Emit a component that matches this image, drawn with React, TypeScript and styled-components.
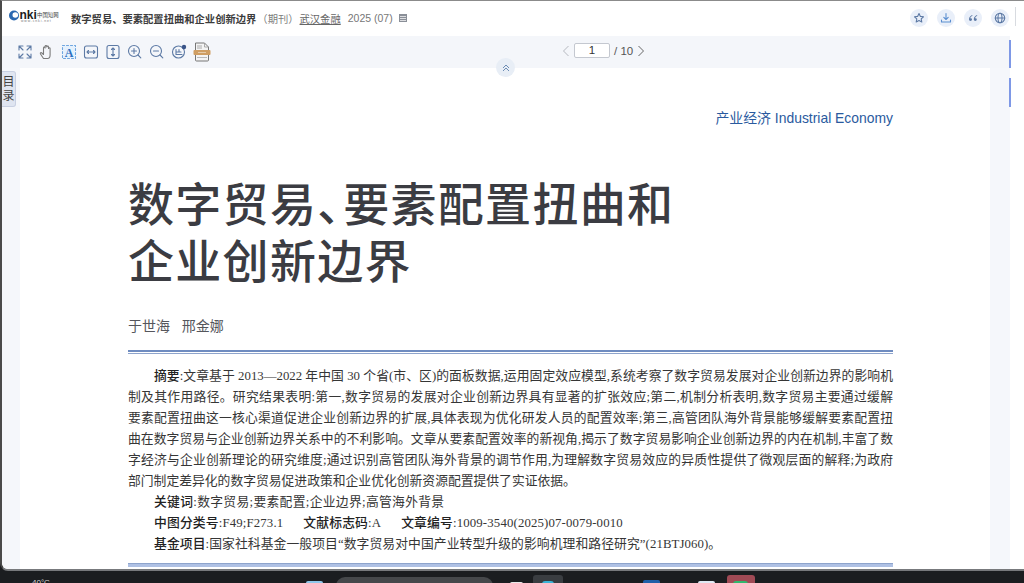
import React from 'react';
import styled, { createGlobalStyle } from 'styled-components';

const GlobalStyle = createGlobalStyle`
  html, body {
    margin: 0;
    padding: 0;
    background: #1b1d20;
  }
  * {
    box-sizing: border-box;
  }
`;

const CJK = `"Liberation Sans", "Noto Sans CJK SC", sans-serif`;
const CJK_SERIF = `"Liberation Serif", "Noto Sans CJK SC", serif`;

const Screen = styled.div`
  width: 1024px;
  height: 583px;
  display: flex;
  flex-direction: column;
  overflow: hidden;
  background: #1b1d20;
`;

const Viewer = styled.div`
  position: relative;
  height: 571px;
  flex: none;
  display: flex;
  flex-direction: column;
  background: #fff;
  border-top: 1px solid #8b8b8b;
  border-left: 2px solid #4a4a4a;
  border-bottom: 2px solid #77797c;
  border-bottom-left-radius: 8px;
  overflow: hidden;
`;

const Header = styled.header`
  height: 35px;
  flex: none;
  display: flex;
  align-items: center;
  padding: 0 15px 1px 7px;
  background: #fff;
  font-family: ${CJK};
`;

const LogoBox = styled.div`
  width: 52px;
  height: 16px;
  flex: none;
  align-self: flex-start;
  margin: 9px 10px 0 0;
`;

const Title = styled.span`
  font-size: 10.3px;
  font-weight: 700;
  color: #3c3c3c;
  white-space: nowrap;
`;

const Kind = styled.span`
  font-size: 10.3px;
  color: #7d7d7d;
  margin-left: 1px;
  margin-right: 1px;
  white-space: nowrap;
`;

const Journal = styled.span`
  font-size: 10.3px;
  color: #666;
  text-decoration: underline;
  white-space: nowrap;
`;

const Issue = styled.span`
  font-size: 10.5px;
  color: #777;
  margin-left: 7px;
  white-space: nowrap;
`;

const IssueIcon = styled.svg`
  width: 10px;
  height: 10px;
  margin-left: 5px;
  flex: none;
`;

const HeaderActions = styled.div`
  margin-left: auto;
  display: flex;
  gap: 9px;
`;

const RoundAction = styled.div`
  width: 18px;
  height: 18px;
  border-radius: 50%;
  background: #e9eff9;
  display: flex;
  align-items: center;
  justify-content: center;
`;

const HeaderDivider = styled.div`
  position: absolute;
  left: 1013px;
  top: 6px;
  width: 1px;
  height: 19px;
  background: #d8dbe0;
`;

const Toolbar = styled.div`
  height: 32px;
  flex: none;
  display: flex;
  align-items: center;
  position: relative;
  background: #f4f6fa;
  padding-left: 15px;
  margin-right: 14px;
`;

const Tools = styled.div`
  display: flex;
  align-items: center;
  gap: 6px;
`;

const Pager = styled.div`
  position: absolute;
  left: 560px;
  top: 7px;
  display: flex;
  align-items: center;
  gap: 4px;
  font-family: "Liberation Sans", sans-serif;
  font-size: 11.5px;
  color: #555;
`;

const PageInput = styled.div`
  width: 36px;
  height: 15px;
  background: #fff;
  border: 1px solid #c4c8d0;
  border-radius: 2px;
  text-align: center;
  line-height: 13px;
  color: #333;
`;

const CollapseButton = styled.div`
  position: absolute;
  left: 494px;
  top: 57px;
  width: 19px;
  height: 19px;
  border-radius: 50%;
  background: #e8eef6;
  display: flex;
  align-items: center;
  justify-content: center;
  z-index: 2;
`;

const Workspace = styled.div`
  flex: 1;
  display: flex;
  min-height: 0;
`;

const SideGutter = styled.div<{ $width: number }>`
  width: ${({ $width }) => $width}px;
  flex: none;
  background: #f5f7fb;
`;

const RightRail = styled.div`
  width: 14px;
  flex: none;
  background: #fff;
`;

const OutlineTab = styled.div`
  position: absolute;
  left: 0;
  top: 70px;
  width: 14px;
  height: 36px;
  background: #dfe5f1;
  border: 1px solid #c8d0e2;
  border-left: none;
  border-radius: 0 3px 3px 0;
  font-family: ${CJK};
  font-size: 12px;
  line-height: 14px;
  color: #444;
  text-align: center;
  padding-top: 3px;
`;

const Stripe = styled.div<{ $top: number; $height: number }>`
  position: absolute;
  right: 13px;
  top: ${({ $top }) => $top}px;
  width: 2px;
  height: ${({ $height }) => $height}px;
  background: #7e98e6;
`;

const Paper = styled.main`
  flex: 1;
  background: #fff;
  padding: 41px 98px 0 108px;
  overflow: hidden;
`;

const Column = styled.div`
  width: 765px;
  display: flex;
  flex-direction: column;
`;

const Section = styled.div`
  align-self: flex-end;
  font-family: ${CJK};
  font-size: 13.9px;
  line-height: 18px;
  color: #2a5a9e;
  white-space: nowrap;
`;

const PaperTitle = styled.h1`
  margin: 50px 0 0;
  font-family: ${CJK};
  font-size: 46px;
  font-weight: 500;
  line-height: 57px;
  letter-spacing: 1.3px;
  color: #3b3c42;
  white-space: nowrap;
`;

const NarrowMark = styled.span`
  letter-spacing: -20px;
`;

const Authors = styled.div`
  margin-top: 26px;
  font-family: ${CJK};
  font-size: 14px;
  line-height: 18px;
  color: #55565c;
  white-space: pre;
`;

const DoubleRule = styled.div`
  height: 4px;
  margin-top: 15px;
  border-top: 2px solid #6f8cc0;
  border-bottom: 1px solid #8ea4cc;
`;

const ClosingRule = styled.div`
  height: 4px;
  margin-top: 8px;
  background: #afc1e4;
  border-top: 1px solid #8ea4cc;
`;

const AbstractBlock = styled.div`
  margin-top: 12px;
  display: flex;
  flex-direction: column;
`;

const Line = styled.div<{ $indent?: boolean; $last?: boolean; $track?: number }>`
  height: 21px;
  font-family: ${CJK_SERIF};
  font-size: 12.8px;
  line-height: 21px;
  color: #363636;
  letter-spacing: ${({ $track }) => $track ?? 0}px;
  padding-left: ${({ $indent }) => ($indent ? 26 : 0)}px;
  text-align: justify;
  text-align-last: ${({ $last }) => ($last ? 'left' : 'justify')};
`;

const Strong = styled.span`
  font-weight: 500;
  color: #222;
`;

const FieldGap = styled.span`
  display: inline-block;
  width: 20px;
`;

const Taskbar = styled.footer`
  flex: 1;
  display: flex;
  align-items: flex-start;
  padding-left: 32px;
  overflow: hidden;
  background: #1b1d20;
`;

const Weather = styled.span`
  margin-top: 7px;
  font-family: "Liberation Sans", sans-serif;
  font-size: 8px;
  line-height: 10px;
  color: #d8d8d8;
`;

const TaskIcon = styled.div<{ $width: number; $before: number; $top: number; $color: string }>`
  width: ${({ $width }) => $width}px;
  height: 12px;
  flex: none;
  margin-left: ${({ $before }) => $before}px;
  margin-top: ${({ $top }) => $top}px;
  background: ${({ $color }) => $color};
  border-radius: 2px 2px 0 0;
`;

const SearchPill = styled.div`
  width: 157px;
  height: 16px;
  flex: none;
  margin: 6px 0 0 13px;
  background: #46484b;
  border-radius: 9px 9px 0 0;
`;

const Tile = styled.div<{ $width: number; $before: number; $color: string }>`
  width: ${({ $width }) => $width}px;
  height: 14px;
  flex: none;
  margin: 4px 0 0 ${({ $before }) => $before}px;
  padding-top: 6px;
  display: flex;
  justify-content: center;
  background: ${({ $color }) => $color};
  border-radius: 3px 3px 0 0;
`;

const TileGlyph = styled.div<{ $width: number; $color: string }>`
  width: ${({ $width }) => $width}px;
  height: 8px;
  background: ${({ $color }) => $color};
  border-radius: 3px 3px 0 0;
`;

const icon = { fill: 'none', stroke: '#5d7aa5', strokeWidth: 1.1, strokeLinecap: 'round', strokeLinejoin: 'round' } as const;

const Logo = () => (
  <svg viewBox="0 0 52 16" width="52" height="16">
    <circle cx="5" cy="5.5" r="5" fill="#2a68b0" />
    <circle cx="6.3" cy="5" r="2.8" fill="#fff" />
    <text x="10.5" y="8.6" fontFamily="Liberation Sans, sans-serif" fontSize="12" fontWeight="700" fill="#1c1c1c">nki</text>
    <text x="28" y="7.4" fontFamily="Noto Sans CJK SC, sans-serif" fontSize="5.4" fill="#444">中国知网</text>
    <text x="12" y="12" fontFamily="Liberation Sans, sans-serif" fontSize="3.4" letterSpacing="0.9" fill="#777">www.cnki.net</text>
  </svg>
);

const ToolIcon = ({ children }: { children: React.ReactNode }) => (
  <svg viewBox="0 0 16 16" width="16" height="16" {...icon}>
    {children}
  </svg>
);

const App = () => (
  <Screen>
    <GlobalStyle />
    <Viewer>
      <Header>
        <LogoBox>
          <Logo />
        </LogoBox>
        <Title>数字贸易、要素配置扭曲和企业创新边界</Title>
        <Kind>（期刊）</Kind>
        <Journal>武汉金融</Journal>
        <Issue>2025 (07)</Issue>
        <IssueIcon viewBox="0 0 10 10">
          <rect x="1" y="1" width="8" height="8" fill="#8a8f98" />
          <path d="M2 3.5h6M2 5.5h6M2 7.5h6" stroke="#fff" strokeWidth="0.7" />
        </IssueIcon>
        <HeaderActions>
          <RoundAction>
            <svg viewBox="0 0 12 12" width="12" height="12" {...icon}>
              <path d="M6 1.5l1.4 2.9 3.1.4-2.3 2.1.6 3.1L6 8.6 3.2 10l.6-3.1L1.5 4.8l3.1-.4z" />
            </svg>
          </RoundAction>
          <RoundAction>
            <svg viewBox="0 0 12 12" width="12" height="12" {...icon} stroke="#5b8fd0">
              <path d="M6 1.5v6M3.8 5.4L6 7.5l2.2-2.1M1.5 8v2h9V8" />
            </svg>
          </RoundAction>
          <RoundAction>
            <svg viewBox="0 0 12 12" width="12" height="12" fill="#5d7aa5">
              <path d="M5.2 3C3.4 3.8 2 5.2 2 7.3 2 8.4 2.7 9 3.5 9S5 8.4 5 7.6 4.4 6.3 3.7 6.3c-.2 0-.4 0-.5.1.2-1 .9-1.9 2.3-2.6zM10 3C8.2 3.8 6.8 5.2 6.8 7.3 6.8 8.4 7.5 9 8.3 9s1.5-.6 1.5-1.4-.6-1.3-1.3-1.3c-.2 0-.4 0-.5.1.2-1 .9-1.9 2.3-2.6z" />
            </svg>
          </RoundAction>
          <RoundAction>
            <svg viewBox="0 0 12 12" width="12" height="12" {...icon}>
              <circle cx="6" cy="6" r="4.7" />
              <ellipse cx="6" cy="6" rx="2" ry="4.7" />
              <path d="M1.3 6h9.4" />
            </svg>
          </RoundAction>
        </HeaderActions>
        <HeaderDivider />
      </Header>
      <Toolbar>
        <Tools>
          <ToolIcon>
            <path d="M2 6V2h4M2 2l4 4M14 6V2h-4M14 2l-4 4M2 10v4h4M2 14l4-4M14 10v4h-4M14 14l-4-4" />
          </ToolIcon>
          <ToolIcon>
            <path d="M4.5 14.5L1.5 10c-.6-1 .6-1.8 1.4-1L4.5 10.5V4c0-1.2 1.6-1.2 1.6 0V2.5c0-1.2 1.7-1.2 1.7 0V3c0-1.2 1.7-1.2 1.7 0v1.5c0-1 1.6-1 1.6 0V11c0 2-1 3.5-2.5 3.5H4.5z" stroke="#7c7c7c" />
          </ToolIcon>
          <ToolIcon>
            <rect x="1.5" y="1.5" width="13" height="13" stroke="#6fa6e0" strokeDasharray="2 2" fill="#e5f1fd" />
            <text x="8" y="12.5" textAnchor="middle" fontFamily="Liberation Serif, serif" fontSize="12" fontWeight="700" fill="#2c6fc0" stroke="none">A</text>
          </ToolIcon>
          <ToolIcon>
            <rect x="1.5" y="2" width="13" height="12" rx="2" />
            <path d="M4 8h8M5.5 6.5L4 8l1.5 1.5M10.5 6.5L12 8l-1.5 1.5" />
          </ToolIcon>
          <ToolIcon>
            <rect x="2" y="1.5" width="12" height="13" rx="2" />
            <path d="M8 4v8M6.5 5.5L8 4l1.5 1.5M6.5 10.5L8 12l1.5-1.5" />
          </ToolIcon>
          <ToolIcon>
            <circle cx="7" cy="7" r="5.5" />
            <path d="M4.5 7h5M7 4.5v5M11 11l2.8 2.8" />
          </ToolIcon>
          <ToolIcon>
            <circle cx="7" cy="7" r="5.5" />
            <path d="M4.5 7h5M11 11l2.8 2.8" />
          </ToolIcon>
          <ToolIcon>
            <circle cx="7.5" cy="8" r="6" />
            <path d="M5 5.5v5h6M5 8h5M8 5.5V8" />
            <circle cx="13" cy="3" r="2.2" fill="#3a5488" stroke="none" />
          </ToolIcon>
          <svg viewBox="0 0 18 20" width="18" height="20">
            <path d="M2.5 1h9l4 4v13a1 1 0 0 1-1 1h-11a1 1 0 0 1-1-1z" fill="#f4f4f4" stroke="#777" strokeWidth="1" />
            <path d="M11.5 1v4h4M4 4h5M4 6h5" fill="none" stroke="#999" strokeWidth="0.8" />
            <rect x="0.5" y="8" width="17" height="5" rx="1" fill="#cf9e63" />
            <path d="M5 10.5h8" stroke="#e6cba9" strokeWidth="1.2" />
            <path d="M4 15.5h10" stroke="#aaa" strokeWidth="0.8" />
          </svg>
        </Tools>
        <Pager>
          <svg viewBox="0 0 8 12" width="8" height="12" fill="none" stroke="#b5b8bf" strokeWidth="1">
            <path d="M6.5 1L1.5 6l5 5" />
          </svg>
          <PageInput>1</PageInput>
          <span>/ 10</span>
          <svg viewBox="0 0 8 12" width="8" height="12" fill="none" stroke="#666" strokeWidth="1">
            <path d="M1.5 1l5 5-5 5" />
          </svg>
        </Pager>
      </Toolbar>
      <CollapseButton>
        <svg viewBox="0 0 10 10" width="10" height="10" fill="none" stroke="#6d8db5" strokeWidth="1">
          <path d="M2 5l3-3 3 3M2 8l3-3 3 3" />
        </svg>
      </CollapseButton>
      <OutlineTab>目录</OutlineTab>
      <Stripe $top={39} $height={28} />
      <Stripe $top={77} $height={29} />
      <Workspace>
        <SideGutter $width={18} />
        <Paper>
          <Column>
            <Section>产业经济 Industrial Economy</Section>
            <PaperTitle>
              数字贸易<NarrowMark>、</NarrowMark>要素配置扭曲和
              <br />
              企业创新边界
            </PaperTitle>
            <Authors>于世海{'   '}邢金娜</Authors>
            <DoubleRule />
            <AbstractBlock>
              <Line $indent>
                <Strong>摘要</Strong>:文章基于 2013—2022 年中国 30 个省(市、区)的面板数据,运用固定效应模型,系统考察了数字贸易发展对企业创新边界的影响机
              </Line>
              <Line>制及其作用路径。研究结果表明:第一,数字贸易的发展对企业创新边界具有显著的扩张效应;第二,机制分析表明,数字贸易主要通过缓解</Line>
              <Line>要素配置扭曲这一核心渠道促进企业创新边界的扩展,具体表现为优化研发人员的配置效率;第三,高管团队海外背景能够缓解要素配置扭</Line>
              <Line>曲在数字贸易与企业创新边界关系中的不利影响。文章从要素配置效率的新视角,揭示了数字贸易影响企业创新边界的内在机制,丰富了数</Line>
              <Line>字经济与企业创新理论的研究维度;通过识别高管团队海外背景的调节作用,为理解数字贸易效应的异质性提供了微观层面的解释;为政府</Line>
              <Line $last>部门制定差异化的数字贸易促进政策和企业优化创新资源配置提供了实证依据。</Line>
              <Line $indent $last $track={0.3}>
                <Strong>关键词</Strong>:数字贸易;要素配置;企业边界;高管海外背景
              </Line>
              <Line $indent $last $track={0.15}>
                <Strong>中图分类号</Strong>:F49;F273.1<FieldGap /><Strong>文献标志码</Strong>:A<FieldGap /><Strong>文章编号</Strong>:1009-3540(2025)07-0079-0010
              </Line>
              <Line $indent $last $track={0.08}>
                <Strong>基金项目</Strong>:国家社科基金一般项目“数字贸易对中国产业转型升级的影响机理和路径研究”(21BTJ060)。
              </Line>
            </AbstractBlock>
            <ClosingRule />
          </Column>
        </Paper>
        <SideGutter $width={20} />
        <RightRail />
      </Workspace>
    </Viewer>
    <Taskbar>
      <Weather>40°C</Weather>
      <TaskIcon $width={17} $before={256} $top={10} $color="#8fc7ea" />
      <SearchPill />
      <TaskIcon $width={13} $before={17} $top={11} $color="#e8e8e8" />
      <Tile $width={30} $before={10} $color="#3a3d41">
        <TileGlyph $width={12} $color="#3bb4d8" />
      </Tile>
      <TaskIcon $width={17} $before={80} $top={9} $color="#1f5fa8" />
      <TaskIcon $width={17} $before={38} $top={10} $color="#dfe8f3" />
      <Tile $width={28} $before={12} $color="#a04a55">
        <TileGlyph $width={15} $color="#2fb86e" />
      </Tile>
    </Taskbar>
  </Screen>
);

export default App;
